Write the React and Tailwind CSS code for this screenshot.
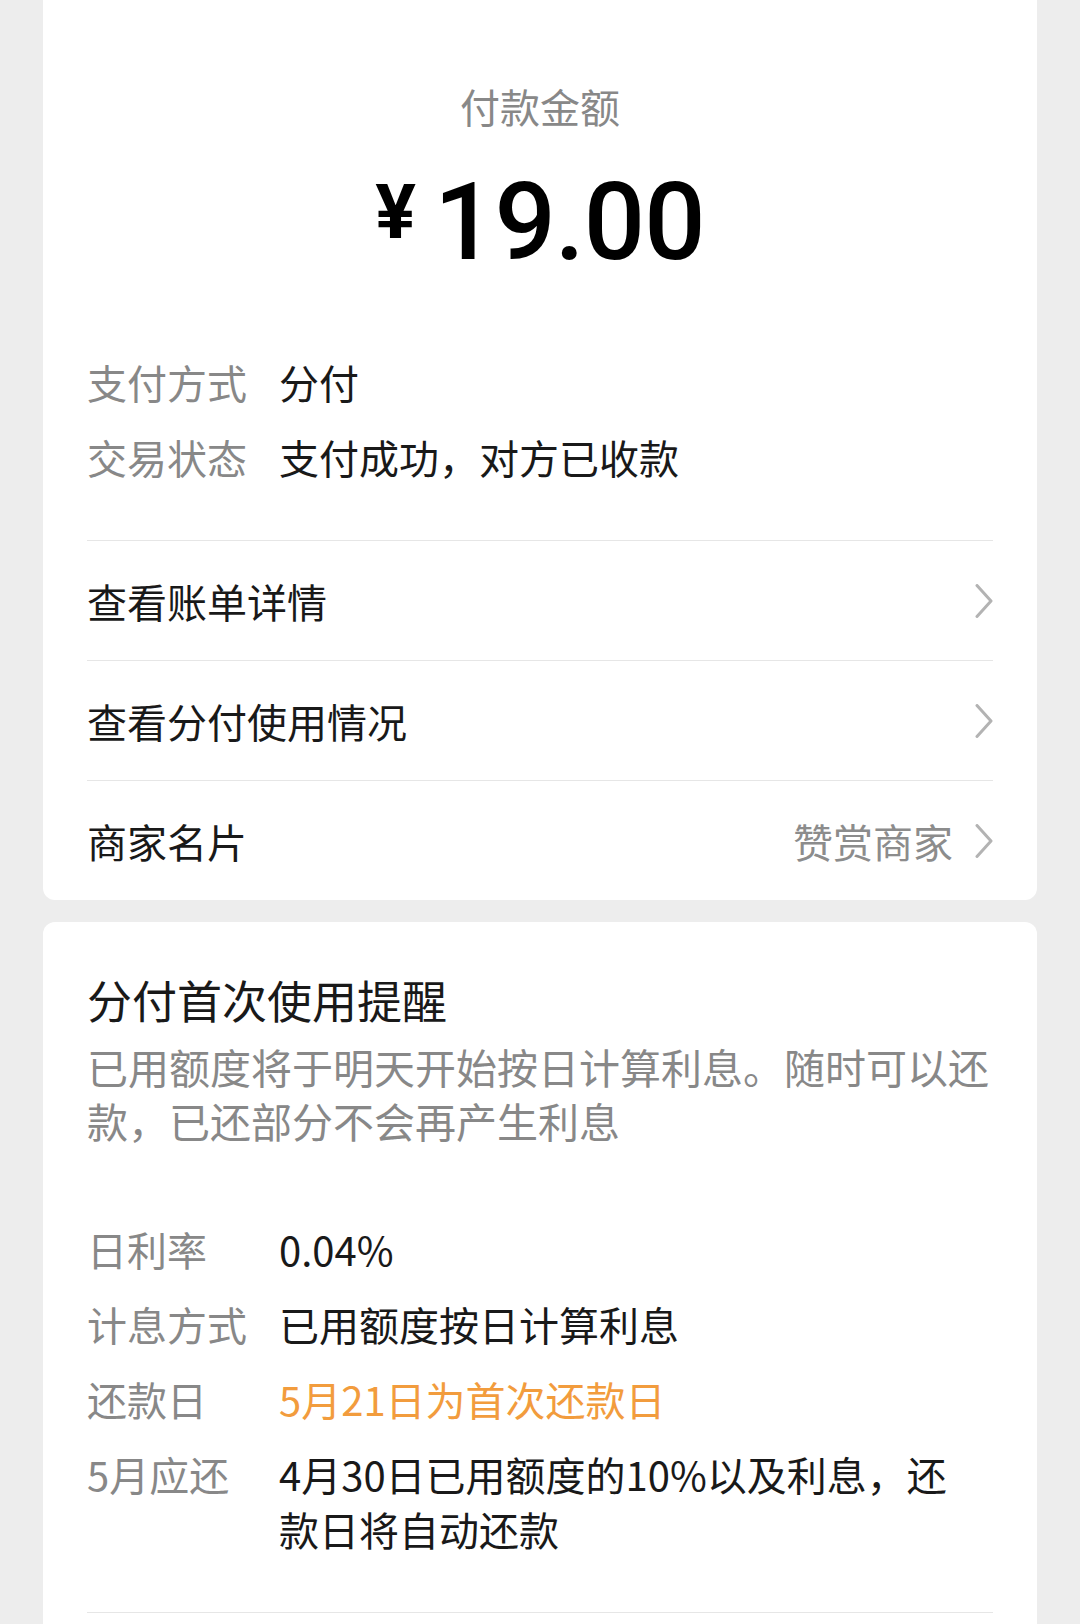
const Chevron = () => (
  <svg width="18" height="34" viewBox="0 0 18 34" fill="none" className="shrink-0">
    <polyline points="2,1.5 16,17 2,32.5" stroke="#b3b3b3" strokeWidth="3" strokeLinecap="round" strokeLinejoin="round" />
  </svg>
)

const InfoRow = ({ label, children, valueClass = "text-[#191919]" }) => (
  <div className="flex">
    <span className="w-[192px] shrink-0 text-[#888888]">{label}</span>
    <span className={valueClass}>{children}</span>
  </div>
)

const LinkRow = ({ label, extra }) => (
  <div className="flex h-[120px] items-center justify-between border-t border-[#e6e6e6]">
    <span className="text-[40px] text-[#191919]">{label}</span>
    <div className="flex items-center gap-[22px]">
      {extra ? <span className="text-[40px] text-[#8c8c8c]">{extra}</span> : null}
      <Chevron />
    </div>
  </div>
)

export default function App() {
  return (
    <div className="h-[1624px] overflow-hidden bg-[#ededed] px-[43px] font-['Noto_Sans_CJK_SC',sans-serif]">
      {/* payment card */}
      <div className="rounded-b-[12px] bg-white px-[44px]">
        <p className="pt-[78px] text-center text-[40px] leading-[56px] text-[#888888]">付款金额</p>
        <div className="mt-[34px] flex items-start justify-center gap-[18px] font-['Roboto',sans-serif] text-black">
          <span className="mt-[6px] text-[76px] font-bold leading-[76px]">¥</span>
          <span className="text-[108px] font-medium leading-[108px] tracking-[-1px]">19.00</span>
        </div>

        <div className="mt-[79px] flex flex-col gap-[20px] text-[40px] leading-[55px]">
          <InfoRow label="支付方式">分付</InfoRow>
          <InfoRow label="交易状态">支付成功，对方已收款</InfoRow>
        </div>

        <div className="mt-[55px]">
          <LinkRow label="查看账单详情" />
          <LinkRow label="查看分付使用情况" />
          <LinkRow label="商家名片" extra="赞赏商家" />
        </div>
      </div>

      {/* first use reminder */}
      <div className="mt-[22px] rounded-[12px] bg-white px-[44px] pt-[48px]">
        <p className="text-[45px] leading-[60px] text-[#191919]">分付首次使用提醒</p>
        <p className="mt-[9px] text-[41px] leading-[54px] text-[#888888]">
          已用额度将于明天开始按日计算利息。随时可以还<br />款，已还部分不会再产生利息
        </p>

        <div className="mt-[75px] flex flex-col gap-[20px] text-[40px] leading-[55px]">
          <InfoRow label="日利率">0.04%</InfoRow>
          <InfoRow label="计息方式">已用额度按日计算利息</InfoRow>
          <InfoRow label="还款日" valueClass="text-[#f29c3d]">5月21日为首次还款日</InfoRow>
          <InfoRow label="5月应还">
            4月30日已用额度的10%以及利息，还<br />款日将自动还款
          </InfoRow>
        </div>

        <div className="mt-[55px] h-[120px] border-t border-[#e6e6e6]" />
      </div>
    </div>
  )
}
